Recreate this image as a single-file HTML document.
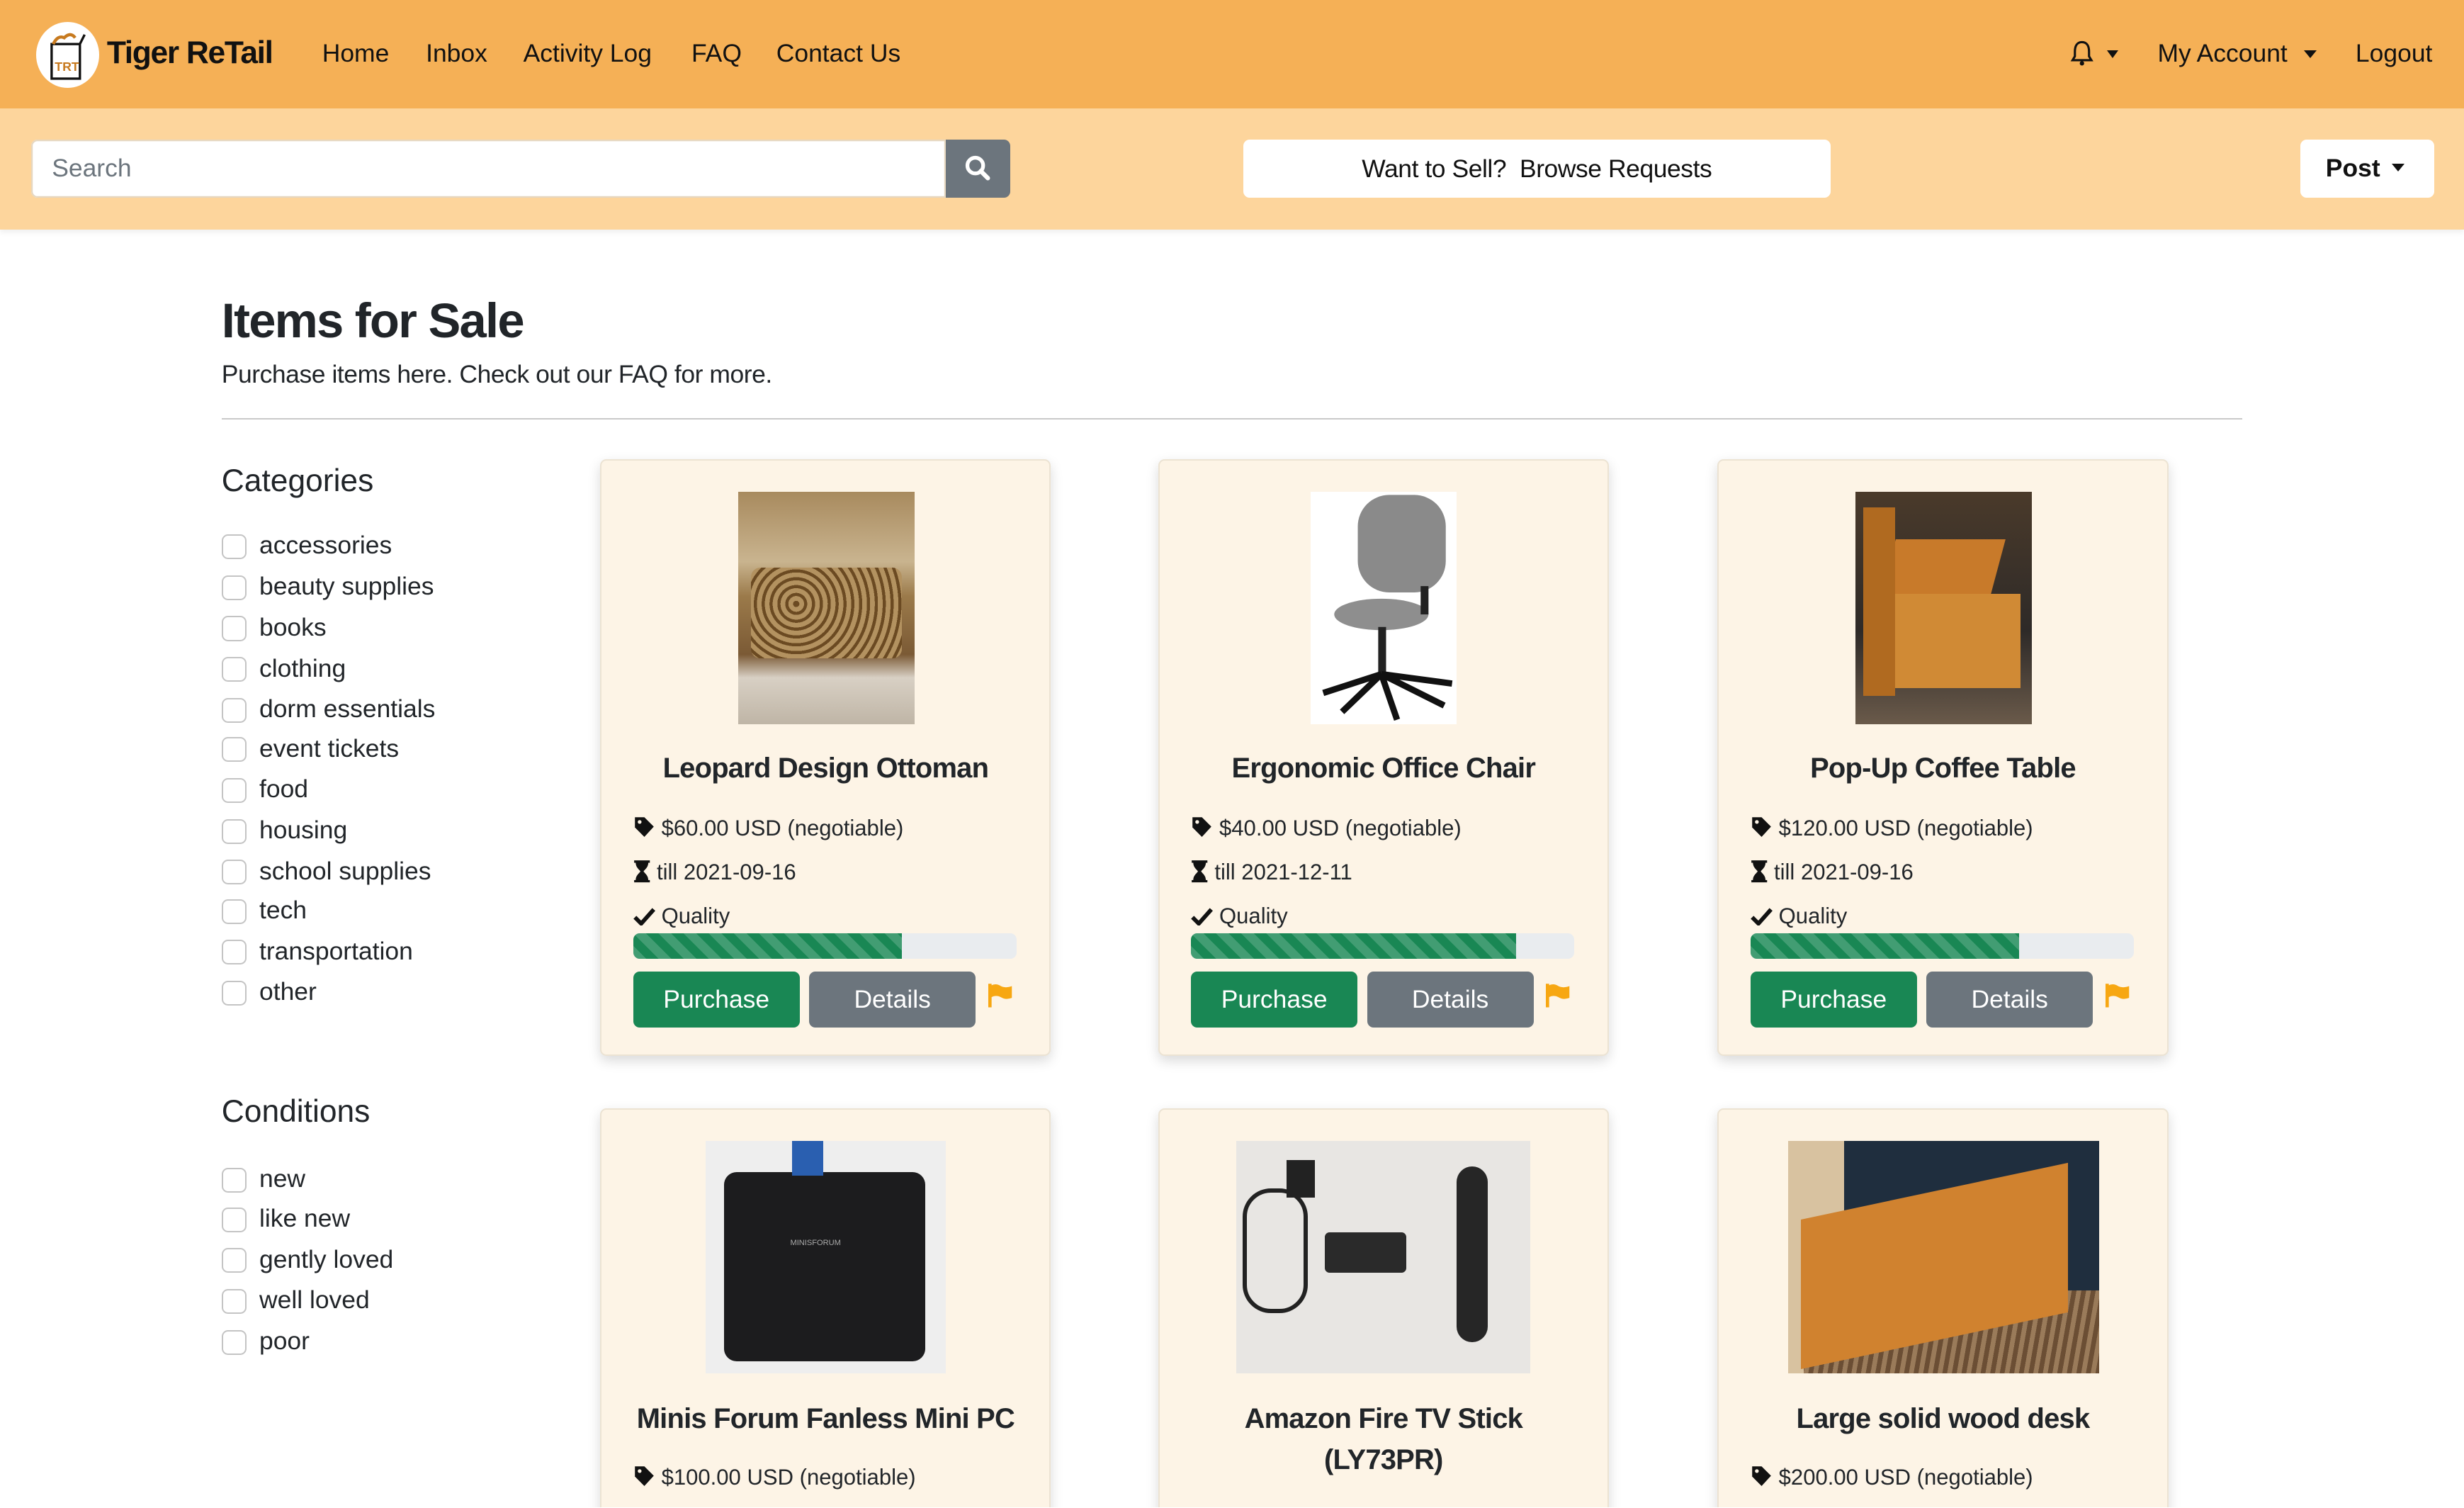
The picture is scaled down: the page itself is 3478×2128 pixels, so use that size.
<!DOCTYPE html>
<html><head><meta charset="utf-8">
<style>
html,body{margin:0;padding:0;background:#fff;overflow:hidden}
#w{zoom:2.2181;width:1568px;height:959px;position:relative;overflow:hidden;font-family:"Liberation Sans",Arial,sans-serif;color:#212529}
.a{position:absolute;white-space:nowrap}
.t{position:absolute;white-space:nowrap;line-height:20px;font-size:16px}
.nav{position:absolute;left:0;top:0;width:1568px;height:69px;background:#f5b056}
.sub{position:absolute;left:0;top:69px;width:1568px;height:77px;background:#fdd59c;box-shadow:0 2px 3px rgba(0,0,0,.06)}
.cb{position:absolute;left:141px;width:14px;height:14px;border:1px solid #c4c4c4;border-radius:4px;background:#fff}
.card{position:absolute;width:285px;background:#fdf4e6;border:1px solid #ece3d3;border-radius:4px;box-shadow:0 3px 8px rgba(0,0,0,.15)}
.ct{position:absolute;left:0;width:285px;text-align:center;font-weight:bold;font-size:18px;line-height:26px;letter-spacing:-.35px}
.pb{position:absolute;left:20px;top:301px;width:244px;height:16px;background:#e9ecef;border-radius:4px;overflow:hidden}
.pf{height:16px;background-color:#198754;background-image:linear-gradient(45deg,rgba(255,255,255,.18) 25%,transparent 25%,transparent 50%,rgba(255,255,255,.18) 50%,rgba(255,255,255,.18) 75%,transparent 75%,transparent);background-size:16px 16px}
.btn{position:absolute;top:325px;width:106px;height:36px;border-radius:4px;color:#fff;font-size:16px;line-height:36px;text-align:center}
.img{position:absolute;overflow:hidden}
</style></head><body><div id="w">
<div class="nav"></div>
<div class="a" style="left:23px;top:14px;width:40px;height:42px;border-radius:50%;background:#fff"></div>
<svg class="a" style="left:29px;top:18px" width="28" height="34" viewBox="0 0 28 34"><rect x="4" y="10" width="18" height="22" fill="#fff" stroke="#111" stroke-width="1.5"/><text x="6" y="27" font-size="8" fill="#c77a1f" font-family="Liberation Sans" font-weight="bold">TRT</text><path d="M5 10 q3-6 7-4 q4-4 7 0" fill="none" stroke="#c77a1f" stroke-width="2"/><path d="M22 10 l3-6" stroke="#111" stroke-width="1.5"/></svg>
<div class="t" style="left:68px;top:24px;font-size:20px;font-weight:bold;color:#111;letter-spacing:-.6px">Tiger ReTail</div>
<div class="t" style="left:205px;top:24px;color:#111">Home</div>
<div class="t" style="left:271px;top:24px;color:#111">Inbox</div>
<div class="t" style="left:333px;top:24px;color:#111">Activity Log</div>
<div class="t" style="left:440px;top:24px;color:#111">FAQ</div>
<div class="t" style="left:494px;top:24px;color:#111">Contact Us</div>
<svg class="a" style="left:1317px;top:25px" width="16" height="18" viewBox="0 0 16 18"><path d="M8 2 C4.5 2 3.5 5 3.5 8 L3.5 11 L2 13.5 L14 13.5 L12.5 11 L12.5 8 C12.5 5 11.5 2 8 2 Z" fill="none" stroke="#111" stroke-width="1.4"/><circle cx="8" cy="15.5" r="1.4" fill="#111"/></svg>
<div class="a" style="left:1341px;top:32px;border:4px solid transparent;border-top:5px solid #111;border-bottom:0"></div>
<div class="t" style="left:1373px;top:24px;color:#111">My Account</div>
<div class="a" style="left:1466px;top:32px;border:4.5px solid transparent;border-top:5px solid #111;border-bottom:0"></div>
<div class="t" style="left:1499px;top:24px;color:#111">Logout</div>

<div class="sub"></div>
<div class="a" style="left:20px;top:89px;width:582px;height:37px;background:#fff;border-radius:4px 0 0 4px;box-shadow:inset 0 0 0 1px #e6d7c0"></div>
<div class="t" style="left:33px;top:97px;color:#6c757d">Search</div>
<div class="a" style="left:602px;top:89px;width:41px;height:37px;background:#6c757d;border-radius:0 4px 4px 0"></div>
<svg class="a" style="left:613px;top:98px" width="18" height="18" viewBox="0 0 18 18"><circle cx="7.5" cy="7.5" r="5" fill="none" stroke="#fff" stroke-width="2.4"/><path d="M11 11 L15.5 15.5" stroke="#fff" stroke-width="2.8" stroke-linecap="round"/></svg>
<div class="a" style="left:791px;top:89px;width:374px;height:37px;background:#fff;border-radius:4px;text-align:center;line-height:37px;font-size:16px;color:#111;letter-spacing:-.2px">Want to Sell?&nbsp; Browse Requests</div>
<div class="a" style="left:1464px;top:89px;width:85px;height:37px;background:#fff;border-radius:4px"></div>
<div class="t" style="left:1480px;top:97px;font-weight:bold;color:#111">Post</div>
<div class="a" style="left:1522px;top:104px;border:4.5px solid transparent;border-top:5px solid #111;border-bottom:0"></div>

<div class="a" style="left:141px;top:186px;font-size:31px;font-weight:bold;line-height:36px;letter-spacing:-.8px">Items for Sale</div>
<div class="t" style="left:141px;top:228px;letter-spacing:-.2px">Purchase items here. Check out our FAQ for more.</div>
<div class="a" style="left:141px;top:266px;width:1286px;height:1px;background:#c9c9c9"></div>

<div class="a" style="left:141px;top:294px;font-size:20px;line-height:24px">Categories</div>
<div class="cb" style="top:340px"></div><div class="t" style="left:165px;top:337px">accessories</div>
<div class="cb" style="top:366px"></div><div class="t" style="left:165px;top:363px">beauty supplies</div>
<div class="cb" style="top:392px"></div><div class="t" style="left:165px;top:389px">books</div>
<div class="cb" style="top:418px"></div><div class="t" style="left:165px;top:415px">clothing</div>
<div class="cb" style="top:444px"></div><div class="t" style="left:165px;top:441px">dorm essentials</div>
<div class="cb" style="top:469px"></div><div class="t" style="left:165px;top:466px">event tickets</div>
<div class="cb" style="top:495px"></div><div class="t" style="left:165px;top:492px">food</div>
<div class="cb" style="top:521px"></div><div class="t" style="left:165px;top:518px">housing</div>
<div class="cb" style="top:547px"></div><div class="t" style="left:165px;top:544px">school supplies</div>
<div class="cb" style="top:572px"></div><div class="t" style="left:165px;top:569px">tech</div>
<div class="cb" style="top:598px"></div><div class="t" style="left:165px;top:595px">transportation</div>
<div class="cb" style="top:624px"></div><div class="t" style="left:165px;top:621px">other</div>

<div class="a" style="left:141px;top:695px;font-size:20px;line-height:24px">Conditions</div>
<div class="cb" style="top:743px"></div><div class="t" style="left:165px;top:740px">new</div>
<div class="cb" style="top:768px"></div><div class="t" style="left:165px;top:765px">like new</div>
<div class="cb" style="top:794px"></div><div class="t" style="left:165px;top:791px">gently loved</div>
<div class="cb" style="top:820px"></div><div class="t" style="left:165px;top:817px">well loved</div>
<div class="cb" style="top:846px"></div><div class="t" style="left:165px;top:843px">poor</div>

<!-- Row 1 -->
<div class="card" style="left:382px;top:292px;height:378px">
  <div class="img" style="left:87px;top:20px;width:112px;height:148px;background:linear-gradient(#a88a5e 0,#c9b48f 30%,#9b7a4a 45%,#7b5a35 70%,#d8d0c4 80%,#bfb5a6 100%)">
    <div style="position:absolute;left:8px;top:48px;width:96px;height:58px;background:repeating-radial-gradient(circle at 30% 40%,#6b4a22 0 2px,#b39260 2px 5px);border-radius:6px"></div></div>
  <div class="ct" style="top:183px">Leopard Design Ottoman</div>
  <svg class="a" style="left:20px;top:226px" width="14" height="15" viewBox="0 0 14 15"><path d="M1 1 H7 L13 7 L7 13.5 L1 7.5 Z" fill="#111"/><circle cx="4" cy="4" r="1.2" fill="#fdf4e6"/></svg>
  <div class="t" style="left:38px;top:224px;font-size:14px">$60.00 USD (negotiable)</div>
  <svg class="a" style="left:20px;top:254px" width="11" height="15" viewBox="0 0 11 15"><path d="M0.5 0.5H10.5V2H9.5C9.5 5 7 6.5 6.5 7.5C7 8.5 9.5 10 9.5 13H10.5V14.5H0.5V13H1.5C1.5 10 4 8.5 4.5 7.5C4 6.5 1.5 5 1.5 2H0.5Z" fill="#111"/></svg>
  <div class="t" style="left:35px;top:252px;font-size:14px">till 2021-09-16</div>
  <svg class="a" style="left:20px;top:284px" width="14" height="12" viewBox="0 0 14 12"><path d="M1 6.5 L5 10.5 L13 1.5" fill="none" stroke="#111" stroke-width="2.6"/></svg>
  <div class="t" style="left:38px;top:280px;font-size:14px">Quality</div>
  <div class="pb"><div class="pf" style="width:171px"></div></div>
  <div class="btn" style="left:20px;background:#198754">Purchase</div>
  <div class="btn" style="left:132px;background:#6c757d">Details</div>
  <svg class="a" style="left:246px;top:332px" width="16" height="16" viewBox="0 0 16 16"><path d="M1 1V16" stroke="#f7a712" stroke-width="2.2"/><path d="M2 2 Q5 0.5 8 2.5 Q11 4 15 2.5 V10 Q11 11.5 8 9.5 Q5 8 2 9.5Z" fill="#f7a712"/></svg>
</div>

<div class="card" style="left:737px;top:292px;height:378px">
  <div class="img" style="left:96px;top:20px;width:93px;height:148px;background:#fff">
    <svg width="93" height="148" viewBox="0 0 93 148"><rect x="30" y="2" width="56" height="62" rx="20" fill="#8a8a8a"/><ellipse cx="45" cy="78" rx="30" ry="10" fill="#8e8e8e"/><rect x="43" y="86" width="5" height="30" fill="#222"/><path d="M45 116 L8 128 M45 116 L20 140 M45 116 L55 145 M45 116 L85 136 M45 116 L90 122" stroke="#111" stroke-width="4"/><rect x="70" y="60" width="5" height="18" fill="#222"/></svg></div>
  <div class="ct" style="top:183px">Ergonomic Office Chair</div>
  <svg class="a" style="left:20px;top:226px" width="14" height="15" viewBox="0 0 14 15"><path d="M1 1 H7 L13 7 L7 13.5 L1 7.5 Z" fill="#111"/><circle cx="4" cy="4" r="1.2" fill="#fdf4e6"/></svg>
  <div class="t" style="left:38px;top:224px;font-size:14px">$40.00 USD (negotiable)</div>
  <svg class="a" style="left:20px;top:254px" width="11" height="15" viewBox="0 0 11 15"><path d="M0.5 0.5H10.5V2H9.5C9.5 5 7 6.5 6.5 7.5C7 8.5 9.5 10 9.5 13H10.5V14.5H0.5V13H1.5C1.5 10 4 8.5 4.5 7.5C4 6.5 1.5 5 1.5 2H0.5Z" fill="#111"/></svg>
  <div class="t" style="left:35px;top:252px;font-size:14px">till 2021-12-11</div>
  <svg class="a" style="left:20px;top:284px" width="14" height="12" viewBox="0 0 14 12"><path d="M1 6.5 L5 10.5 L13 1.5" fill="none" stroke="#111" stroke-width="2.6"/></svg>
  <div class="t" style="left:38px;top:280px;font-size:14px">Quality</div>
  <div class="pb"><div class="pf" style="width:207px"></div></div>
  <div class="btn" style="left:20px;background:#198754">Purchase</div>
  <div class="btn" style="left:132px;background:#6c757d">Details</div>
  <svg class="a" style="left:246px;top:332px" width="16" height="16" viewBox="0 0 16 16"><path d="M1 1V16" stroke="#f7a712" stroke-width="2.2"/><path d="M2 2 Q5 0.5 8 2.5 Q11 4 15 2.5 V10 Q11 11.5 8 9.5 Q5 8 2 9.5Z" fill="#f7a712"/></svg>
</div>

<div class="card" style="left:1093px;top:292px;height:378px">
  <div class="img" style="left:87px;top:20px;width:112px;height:148px;background:linear-gradient(#4a3a2a,#2e2a28 60%,#6a5a4a)">
    <div style="position:absolute;left:20px;top:30px;width:70px;height:40px;background:#c87a2a;transform:skewX(-15deg)"></div>
    <div style="position:absolute;left:15px;top:65px;width:90px;height:60px;background:#d08a35"></div>
    <div style="position:absolute;left:5px;top:10px;width:20px;height:120px;background:#b06a20"></div></div>
  <div class="ct" style="top:183px">Pop-Up Coffee Table</div>
  <svg class="a" style="left:20px;top:226px" width="14" height="15" viewBox="0 0 14 15"><path d="M1 1 H7 L13 7 L7 13.5 L1 7.5 Z" fill="#111"/><circle cx="4" cy="4" r="1.2" fill="#fdf4e6"/></svg>
  <div class="t" style="left:38px;top:224px;font-size:14px">$120.00 USD (negotiable)</div>
  <svg class="a" style="left:20px;top:254px" width="11" height="15" viewBox="0 0 11 15"><path d="M0.5 0.5H10.5V2H9.5C9.5 5 7 6.5 6.5 7.5C7 8.5 9.5 10 9.5 13H10.5V14.5H0.5V13H1.5C1.5 10 4 8.5 4.5 7.5C4 6.5 1.5 5 1.5 2H0.5Z" fill="#111"/></svg>
  <div class="t" style="left:35px;top:252px;font-size:14px">till 2021-09-16</div>
  <svg class="a" style="left:20px;top:284px" width="14" height="12" viewBox="0 0 14 12"><path d="M1 6.5 L5 10.5 L13 1.5" fill="none" stroke="#111" stroke-width="2.6"/></svg>
  <div class="t" style="left:38px;top:280px;font-size:14px">Quality</div>
  <div class="pb"><div class="pf" style="width:171px"></div></div>
  <div class="btn" style="left:20px;background:#198754">Purchase</div>
  <div class="btn" style="left:132px;background:#6c757d">Details</div>
  <svg class="a" style="left:246px;top:332px" width="16" height="16" viewBox="0 0 16 16"><path d="M1 1V16" stroke="#f7a712" stroke-width="2.2"/><path d="M2 2 Q5 0.5 8 2.5 Q11 4 15 2.5 V10 Q11 11.5 8 9.5 Q5 8 2 9.5Z" fill="#f7a712"/></svg>
</div>

<!-- Row 2 -->
<div class="card" style="left:382px;top:705px;height:300px">
  <div class="img" style="left:66px;top:20px;width:153px;height:148px;background:#eeeeee">
    <div style="position:absolute;left:12px;top:20px;width:128px;height:120px;background:#1c1c1e;border-radius:8px"></div>
    <div style="position:absolute;left:55px;top:0;width:20px;height:22px;background:#2a5fb0"></div>
    <div style="position:absolute;left:54px;top:62px;font-size:5px;color:#aaa">MINISFORUM</div></div>
  <div class="ct" style="top:184px">Minis Forum Fanless Mini PC</div>
  <svg class="a" style="left:20px;top:226px" width="14" height="15" viewBox="0 0 14 15"><path d="M1 1 H7 L13 7 L7 13.5 L1 7.5 Z" fill="#111"/><circle cx="4" cy="4" r="1.2" fill="#fdf4e6"/></svg>
  <div class="t" style="left:38px;top:224px;font-size:14px">$100.00 USD (negotiable)</div>
</div>

<div class="card" style="left:737px;top:705px;height:300px">
  <div class="img" style="left:49px;top:20px;width:187px;height:148px;background:#e8e6e3">
    <div style="position:absolute;left:140px;top:16px;width:20px;height:112px;background:#262626;border-radius:10px"></div>
    <div style="position:absolute;left:56px;top:58px;width:52px;height:26px;background:#2a2a2a;border-radius:3px"></div>
    <div style="position:absolute;left:32px;top:12px;width:18px;height:24px;background:#222"></div>
    <div style="position:absolute;left:4px;top:30px;width:36px;height:74px;border:3px solid #222;border-radius:18px"></div></div>
  <div class="ct" style="top:184px">Amazon Fire TV Stick<br>(LY73PR)</div>
</div>

<div class="card" style="left:1093px;top:705px;height:300px">
  <div class="img" style="left:44px;top:20px;width:198px;height:148px;background:linear-gradient(90deg,#d8c2a0 0,#d8c2a0 18%,#1f2e3e 18%)">
    <div style="position:absolute;left:10px;top:95px;width:188px;height:55px;background:repeating-linear-gradient(100deg,#6b4e34 0 3px,#9a7b5a 3px 6px)"></div>
    <div style="position:absolute;left:8px;top:50px;width:170px;height:95px;background:#d0822f;transform:skewY(-12deg);transform-origin:0 100%"></div></div>
  <div class="ct" style="top:184px">Large solid wood desk</div>
  <svg class="a" style="left:20px;top:226px" width="14" height="15" viewBox="0 0 14 15"><path d="M1 1 H7 L13 7 L7 13.5 L1 7.5 Z" fill="#111"/><circle cx="4" cy="4" r="1.2" fill="#fdf4e6"/></svg>
  <div class="t" style="left:38px;top:224px;font-size:14px">$200.00 USD (negotiable)</div>
</div>
</div></body></html>
